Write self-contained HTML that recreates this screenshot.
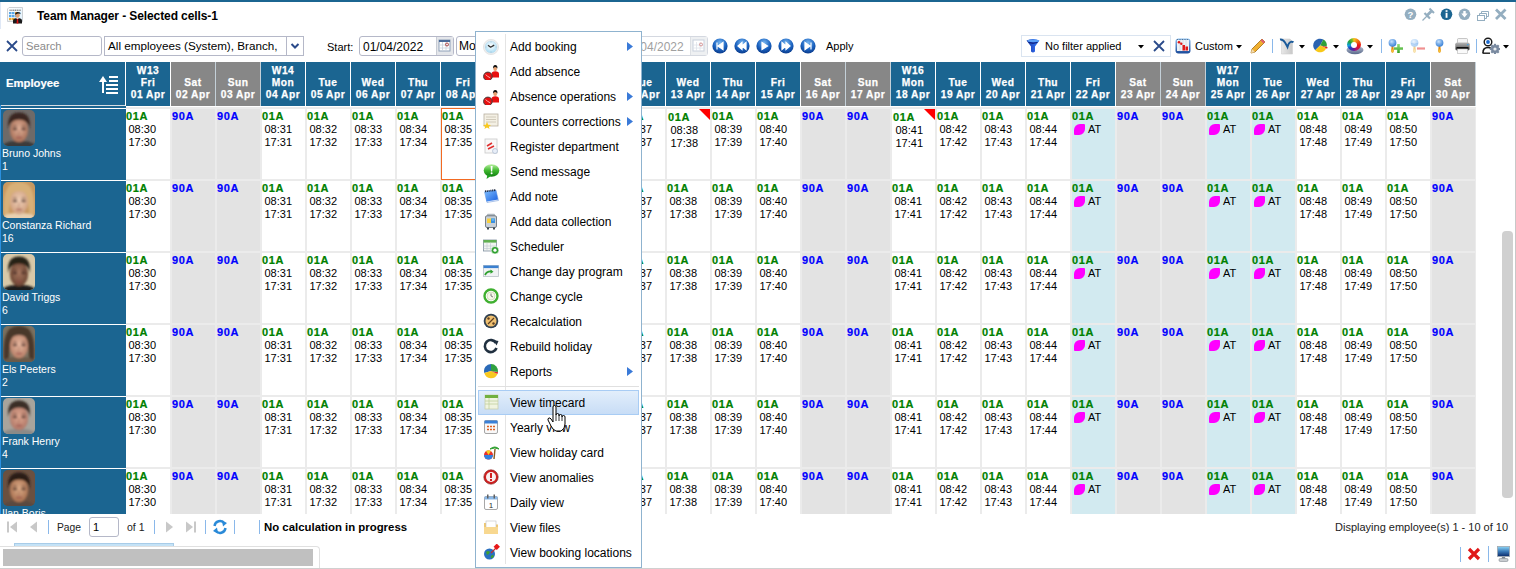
<!DOCTYPE html>
<html><head><meta charset="utf-8"><title>Team Manager</title>
<style>
*{box-sizing:border-box}
html,body{margin:0;padding:0}
body{width:1516px;height:569px;overflow:hidden;position:relative;background:#fff;font-family:"Liberation Sans",sans-serif;color:#000}
.ab{position:absolute}
.t{position:absolute;white-space:nowrap;line-height:1}
.hd{position:absolute;top:0;height:44px;width:44px;color:#fff;font-weight:bold;font-size:10.2px;letter-spacing:0.5px;text-align:center;-webkit-text-stroke:0.25px #fff}
.hd span{position:absolute;left:0;width:44px;line-height:12px}
.c{position:absolute;width:43px;height:70px;background:#fff;font-size:11px}
.c b{position:absolute;left:0;top:1px;font-size:11px;line-height:13px;letter-spacing:0.6px;-webkit-text-stroke:0.2px}
.g{color:#008000}
.bl{color:#0000ff}
.c i{position:absolute;font-style:normal;left:3px;line-height:13px}
.we{background:#e3e3e3}
.at{background:#d2eaf0}
.leaf{position:absolute;left:2px;top:15px;width:11px;height:11px;background:#ff00ff;border-radius:6px 1px 6px 1px}
.emp{position:absolute;left:0;width:126px;height:71px;background:#1b6591;color:#fff;font-size:10px}
.mi{position:absolute;left:510px;font-size:12px;line-height:14px;white-space:nowrap}
.ic{position:absolute;left:483px;width:16px;height:16px}
</style></head><body>

<div class="ab" style="left:0;top:0;width:1516px;height:2px;background:#1b6591"></div>
<div class="ab" style="left:1515px;top:2px;width:1px;height:567px;background:#c8c8c8"></div>
<div class="ab" style="left:0;top:2px;width:1px;height:27px;background:#dfe8f6"></div>
<svg class="ab" style="left:7px;top:7px" width="16" height="17" viewBox="0 0 16 17">
<defs><linearGradient id="tg" x1="0" y1="0" x2="1" y2="1"><stop offset="0" stop-color="#ffffff"/><stop offset="1" stop-color="#dff0fb"/></linearGradient></defs>
<path d="M2 0.5 H15.5 V14.5 H0.5 V2z" fill="url(#tg)" stroke="#c8ccd0" stroke-width="0.9"/>
<path d="M2.5 3.2 H14" stroke="#303030" stroke-width="0.8" stroke-dasharray="1.2 0.6"/>
<rect x="2" y="5" width="2.5" height="2.2" fill="#5aa8e8"/><rect x="5" y="5" width="2.5" height="2.2" fill="#5aa8e8"/><rect x="8" y="5" width="2.5" height="2.2" fill="#f0a830"/><rect x="11" y="5" width="2.5" height="2.2" fill="#8cc8f0"/>
<rect x="2" y="8" width="2.5" height="2.2" fill="#5aa8e8"/><rect x="5" y="8" width="2.5" height="2.2" fill="#5aa8e8"/><rect x="8" y="8" width="2.5" height="2.2" fill="#5aa8e8"/>
<rect x="2" y="11" width="2.5" height="2.2" fill="#f0a830"/><rect x="5" y="11" width="2.5" height="2.2" fill="#f0a830"/>
<path d="M6 16.5 V13.5 Q6 11.2 10.5 11 Q15 11.2 15 13.5 V16.5z" fill="#1a1a1a"/>
<path d="M9.3 11 L10.5 13 L11.7 11z" fill="#fff"/><path d="M10 11.8 H11 L11.5 16.5 H9.5z" fill="#e01010"/>
<ellipse cx="10.5" cy="8.3" rx="2.2" ry="2.5" fill="#e0a070"/>
<path d="M8 7.5 Q8 4.8 10.7 5 Q13.5 5 13.5 7.2 L12.5 6.6 Q10.5 6.2 8.6 7.8z" fill="#1a1a1a"/>
</svg>
<div class="t" style="left:37px;top:10px;font-size:12px;font-weight:bold;letter-spacing:-0.1px">Team Manager - Selected cells-1</div>
<svg class="ab" style="left:1404px;top:7px" width="104" height="15" viewBox="0 0 104 15">
<circle cx="6.5" cy="7.3" r="5.8" fill="#94aec0"/><text x="6.5" y="11" font-size="9.5" font-weight="bold" fill="#fff" text-anchor="middle" font-family="Liberation Sans">?</text>
<path d="M18.5 13.5 L23 9" stroke="#94aec0" stroke-width="1.2"/><path d="M20.5 6 L26 11.5" stroke="#94aec0" stroke-width="2.2"/><path d="M23 8.5 L27.5 4" stroke="#94aec0" stroke-width="2.8"/><path d="M25.5 1.5 L30 6" stroke="#94aec0" stroke-width="2"/>
<circle cx="42.5" cy="7.3" r="5.8" fill="#1b6591"/><rect x="41.6" y="5.8" width="1.9" height="5" fill="#fff"/><rect x="41.6" y="3.2" width="1.9" height="1.7" fill="#fff"/>
<circle cx="60.5" cy="7.3" r="5.8" fill="#94aec0"/><path d="M57.3 6.5 H59.3 V4 H61.7 V6.5 H63.7 L60.5 10.5z" fill="#fff"/>
<rect x="73.5" y="8.5" width="7" height="5" fill="#fff" stroke="#94aec0"/><path d="M75.5 8.5 V6.5 H82.5 V11.5 H80.5 M77.5 6.5 V4.5 H84.5 V9.5 H82.5" fill="none" stroke="#94aec0"/>
<path d="M92 2.5 L101.5 12 M101.5 2.5 L92 12" stroke="#94aec0" stroke-width="2.8"/>
</svg>
<svg class="ab" style="left:6px;top:40px" width="12" height="12" viewBox="0 0 12 12"><path d="M1 1 L11 11 M11 1 L1 11" stroke="#2a4a8a" stroke-width="1.8"/></svg>
<div class="ab" style="left:22px;top:36px;width:80px;height:20px;border:1px solid #b5b8c8;border-radius:3px;background:#fff"></div>
<div class="t" style="left:26px;top:41px;font-size:11.2px;color:#8a8a8a">Search</div>
<div class="ab" style="left:104px;top:36px;width:200px;height:20px;border:1px solid #b5b8c8;background:#fff"></div>
<div class="ab" style="left:286px;top:37px;width:1px;height:18px;background:#b5b8c8"></div>
<div class="t" style="left:108px;top:40px;font-size:11.7px;color:#000">All employees (System), Branch,</div>
<svg class="ab" style="left:290px;top:42px" width="10" height="8" viewBox="0 0 10 8"><path d="M1.5 2 L5 5.5 L8.5 2" stroke="#2a4a8a" stroke-width="2" fill="none"/></svg>
<div class="t" style="left:327px;top:42px;font-size:11px">Start:</div>
<div class="ab" style="left:359px;top:36px;width:95px;height:20px;border:1px solid #b5b8c8;border-radius:3px;background:#fff"></div>
<div class="t" style="left:363px;top:41px;font-size:12px">01/04/2022</div>
<div class="ab" style="left:436px;top:37px;width:17px;height:18px;background:#e4e6ea;border-left:1px solid #c8ccd4"></div>
<svg class="ab" style="left:438px;top:39px" width="13" height="13" viewBox="0 0 13 13"><rect x="1" y="1" width="11" height="11" fill="#fff" stroke="#8ea0b8"/><rect x="1" y="1" width="11" height="2" fill="#4a6a98"/><path d="M4.5 3 V12 M8 3 V12 M1 6 H12 M1 9 H12" stroke="#c8d0dc" stroke-width="0.8"/><circle cx="9" cy="5.5" r="1.5" fill="none" stroke="#a02020" stroke-width="0.8"/></svg>
<div class="ab" style="left:456px;top:36px;width:60px;height:20px;border:1px solid #b5b8c8;border-radius:3px;background:#fff"></div>
<div class="t" style="left:459px;top:40px;font-size:12px">Mo</div>
<div class="ab" style="left:600px;top:36px;width:108px;height:20px;border:1px solid #d4d8e0;border-radius:3px;background:#fff"></div>
<div class="t" style="left:637px;top:41px;font-size:12px;color:#a0a0a0">/04/2022</div>
<div class="ab" style="left:690px;top:37px;width:17px;height:18px;background:#eef0f2;border-left:1px solid #dde0e4"></div>
<svg class="ab" style="left:692px;top:39px" width="13" height="13" viewBox="0 0 13 13"><rect x="1" y="1" width="11" height="11" fill="#fff" stroke="#c8d0dc"/><path d="M4.5 3 V12 M8 3 V12 M1 6 H12 M1 9 H12" stroke="#dde2ea" stroke-width="0.8"/><circle cx="9" cy="5.5" r="1.5" fill="none" stroke="#d08080" stroke-width="0.8"/></svg>
<svg class="ab" style="left:712px;top:38px" width="16" height="16" viewBox="0 0 16 16"><defs><radialGradient id="ng0" cx="50%" cy="30%" r="70%"><stop offset="0" stop-color="#7ab8f0"/><stop offset="0.6" stop-color="#1a62c0"/><stop offset="1" stop-color="#0a3a8a"/></radialGradient></defs><circle cx="8" cy="8" r="7.6" fill="url(#ng0)"/><path d="M5 4.5 V11.5 M11 4.5 L6 8 L11 11.5z" fill="#fff" stroke="#fff" stroke-width="1.2"/></svg>
<svg class="ab" style="left:734px;top:38px" width="16" height="16" viewBox="0 0 16 16"><defs><radialGradient id="ng1" cx="50%" cy="30%" r="70%"><stop offset="0" stop-color="#7ab8f0"/><stop offset="0.6" stop-color="#1a62c0"/><stop offset="1" stop-color="#0a3a8a"/></radialGradient></defs><circle cx="8" cy="8" r="7.6" fill="url(#ng1)"/><path d="M8 4.5 L4 8 L8 11.5z M12 4.5 L8 8 L12 11.5z" fill="#fff" stroke="#fff" stroke-width="1.2"/></svg>
<svg class="ab" style="left:756px;top:38px" width="16" height="16" viewBox="0 0 16 16"><defs><radialGradient id="ng2" cx="50%" cy="30%" r="70%"><stop offset="0" stop-color="#7ab8f0"/><stop offset="0.6" stop-color="#1a62c0"/><stop offset="1" stop-color="#0a3a8a"/></radialGradient></defs><circle cx="8" cy="8" r="7.6" fill="url(#ng2)"/><path d="M6 4.5 L11.5 8 L6 11.5z" fill="#fff" stroke="#fff" stroke-width="1.2"/></svg>
<svg class="ab" style="left:778px;top:38px" width="16" height="16" viewBox="0 0 16 16"><defs><radialGradient id="ng3" cx="50%" cy="30%" r="70%"><stop offset="0" stop-color="#7ab8f0"/><stop offset="0.6" stop-color="#1a62c0"/><stop offset="1" stop-color="#0a3a8a"/></radialGradient></defs><circle cx="8" cy="8" r="7.6" fill="url(#ng3)"/><path d="M4 4.5 L8 8 L4 11.5z M8 4.5 L12 8 L8 11.5z" fill="#fff" stroke="#fff" stroke-width="1.2"/></svg>
<svg class="ab" style="left:800px;top:38px" width="16" height="16" viewBox="0 0 16 16"><defs><radialGradient id="ng4" cx="50%" cy="30%" r="70%"><stop offset="0" stop-color="#7ab8f0"/><stop offset="0.6" stop-color="#1a62c0"/><stop offset="1" stop-color="#0a3a8a"/></radialGradient></defs><circle cx="8" cy="8" r="7.6" fill="url(#ng4)"/><path d="M5 4.5 L10 8 L5 11.5z M11 4.5 V11.5" fill="#fff" stroke="#fff" stroke-width="1.2"/></svg>
<div class="t" style="left:826px;top:41px;font-size:11px">Apply</div>
<div class="ab" style="left:1021px;top:35px;width:150px;height:22px;border:1px solid #dae4f0;background:#fff"></div>
<svg class="ab" style="left:1026px;top:38px" width="14" height="15" viewBox="0 0 14 15"><defs><linearGradient id="fg" x1="0" x2="1"><stop offset="0" stop-color="#1a3aa8"/><stop offset="0.6" stop-color="#2a60e0"/><stop offset="1" stop-color="#3a88f0"/></linearGradient></defs><path d="M0.5 2.5 Q7 -0.5 13.5 2.5 L9 8.5 V13.5 Q7 15.5 5 13.5 V8.5z" fill="url(#fg)"/><ellipse cx="7" cy="2.8" rx="5.5" ry="1.3" fill="#5aa0f8"/><path d="M2.5 4.5 Q7 6 11.5 4.5" stroke="#0a1a70" stroke-width="1" fill="none"/></svg>
<div class="t" style="left:1045px;top:41px;font-size:11px;color:#000">No filter applied</div>
<svg class="ab" style="left:1138px;top:45px" width="6" height="4"><path d="M0 0 H6 L3 3.5z" fill="#000"/></svg>
<svg class="ab" style="left:1153px;top:40px" width="12" height="12" viewBox="0 0 12 12"><path d="M1 1 L11 11 M11 1 L1 11" stroke="#2a4a8a" stroke-width="1.8"/></svg>
<svg class="ab" style="left:1175px;top:38px" width="16" height="16" viewBox="0 0 16 16"><defs><linearGradient id="cg" x1="0" y1="0" x2="0" y2="1"><stop offset="0" stop-color="#8ec0f0"/><stop offset="1" stop-color="#1a4a9a"/></linearGradient></defs><rect x="0.5" y="0.5" width="15" height="15" rx="3" fill="url(#cg)"/><rect x="2" y="2" width="12" height="11" fill="#eef2f6"/><path d="M5 2 V13 M8 2 V13 M11 2 V13" stroke="#c8d4e0" stroke-width="0.7"/><path d="M2 1.5 H14" stroke="#506070" stroke-width="0.8" stroke-dasharray="1 1.5"/><circle cx="4" cy="4.2" r="1.3" fill="#e01818"/><circle cx="6.3" cy="5.8" r="1.2" fill="#e01818"/><rect x="7.5" y="7" width="2.5" height="5.5" fill="#e01818"/><rect x="10.5" y="8.5" width="2.5" height="4" fill="#e01818"/></svg>
<div class="t" style="left:1195px;top:41px;font-size:11px">Custom</div>
<svg class="ab" style="left:1236px;top:45px" width="6" height="4"><path d="M0 0 H6 L3 3.5z" fill="#000"/></svg>
<svg class="ab" style="left:1249px;top:38px" width="17" height="17" viewBox="0 0 17 17"><path d="M2 15 L3 11 L13 1 L16 4 L6 14z" fill="#f0b030" stroke="#a06a10" stroke-width="0.8"/><path d="M2 15 L3 11 L6 14z" fill="#f4dcb0"/><path d="M13 1 L16 4 L14.5 5.5 L11.5 2.5z" fill="#e06070"/></svg>
<div class="ab" style="left:1272px;top:39px;width:1px;height:14px;background:#8ab8ea"></div>
<svg class="ab" style="left:1279px;top:38px" width="16" height="17" viewBox="0 0 16 17"><defs><linearGradient id="yg" x1="0" x2="1"><stop offset="0" stop-color="#e8e8e8"/><stop offset="1" stop-color="#c8c8c8"/></linearGradient></defs><path d="M2.5 1 H11 L13.5 3.5 V16 H2.5z" fill="url(#yg)" stroke="#d0d0d0" stroke-width="0.6"/><path d="M1 1.5 Q4 1 6 4.5 Q7.5 7 8.5 9 Q9.5 5 11.5 4 Q13 3.3 14.5 4.3" fill="none" stroke="#1a5a9a" stroke-width="1.9"/></svg>
<svg class="ab" style="left:1299px;top:45px" width="6" height="4"><path d="M0 0 H6 L3 3.5z" fill="#000"/></svg>
<svg class="ab" style="left:1313px;top:38px" width="16" height="16" viewBox="0 0 16 16"><path d="M7 7.5 L2.19 12.31 A6.8 6.8 0 0 1 10.40 1.61z" fill="#2a62b0"/><path d="M7 7.5 L10.40 1.61 A6.8 6.8 0 0 1 13.70 8.68z" fill="#30a038"/><path d="M7.9 7.8 L14.60 8.98 A6.8 6.8 0 0 1 14.06 10.67z" fill="#e82020"/><path d="M7 7.5 L13.16 10.37 A6.8 6.8 0 0 1 2.19 12.31z" fill="#f8c818"/></svg>
<svg class="ab" style="left:1333px;top:45px" width="6" height="4"><path d="M0 0 H6 L3 3.5z" fill="#000"/></svg>
<svg class="ab" style="left:1346px;top:45px" width="18" height="10" viewBox="0 0 18 10"><defs><linearGradient id="bg2" x1="0" y1="0" x2="0" y2="1"><stop offset="0" stop-color="#c0c8d8"/><stop offset="1" stop-color="#58688a"/></linearGradient></defs><ellipse cx="9" cy="5" rx="8.5" ry="4.2" fill="url(#bg2)"/><ellipse cx="9" cy="3.8" rx="6" ry="2.2" fill="#8a98b8"/></svg>
<div class="ab" style="left:1347px;top:38px;width:14px;height:13px;border-radius:50%;background:conic-gradient(#f8c020 0deg,#f07010 50deg,#e81818 100deg,#c01060 150deg,#5020a0 190deg,#2040c0 230deg,#10a0e0 260deg,#20a040 300deg,#80c020 340deg,#f8c020 360deg)"></div>
<div class="ab" style="left:1351px;top:41.5px;width:6px;height:6px;border-radius:50%;background:#fff"></div>
<svg class="ab" style="left:1367px;top:45px" width="6" height="4"><path d="M0 0 H6 L3 3.5z" fill="#000"/></svg>
<div class="ab" style="left:1381px;top:39px;width:1px;height:14px;background:#8ab8ea"></div>
<svg class="ab" style="left:1388px;top:38px" width="16" height="16" viewBox="0 0 16 16"><defs><radialGradient id="p1" cx="40%" cy="35%" r="65%"><stop offset="0" stop-color="#c8e2fc"/><stop offset="1" stop-color="#3a82d8"/></radialGradient></defs><path d="M3.6 8 H5.4 L5.8 12.5 Q5.8 14.8 4.5 14.8 Q3.2 14.8 3.2 12.5z" fill="#e08a10"/><ellipse cx="4.5" cy="12.8" rx="1.1" ry="1.6" fill="#f8c030"/><circle cx="4.5" cy="4.8" r="3.9" fill="url(#p1)"/><path d="M1.2 5.5 Q4.5 7 7.8 5.5" stroke="#5a9ae0" stroke-width="0.5" fill="none" opacity="0.6"/><defs><linearGradient id="pg" x1="0" y1="0" x2="0" y2="1"><stop offset="0" stop-color="#9ae080"/><stop offset="1" stop-color="#30a020"/></linearGradient></defs><path d="M6 10.5 H15 M10.5 6 V15" stroke="url(#pg)" stroke-width="2.6"/></svg>
<svg class="ab" style="left:1410px;top:38px" width="16" height="16" viewBox="0 0 16 16"><defs><radialGradient id="p2" cx="40%" cy="35%" r="65%"><stop offset="0" stop-color="#eaf4fe"/><stop offset="1" stop-color="#a8cdf4"/></radialGradient></defs><path d="M3.6 8 H5.4 L5.8 12.5 Q5.8 14.8 4.5 14.8 Q3.2 14.8 3.2 12.5z" fill="#f0d090"/><ellipse cx="4.5" cy="12.8" rx="1.1" ry="1.6" fill="#fbe6b0"/><circle cx="4.5" cy="4.8" r="3.9" fill="url(#p2)"/><path d="M1.2 5.5 Q4.5 7 7.8 5.5" stroke="#5a9ae0" stroke-width="0.5" fill="none" opacity="0.6"/><path d="M7 10.5 H15" stroke="#f09090" stroke-width="2.2"/></svg>
<svg class="ab" style="left:1435px;top:38px" width="16" height="16" viewBox="0 0 16 16"><defs><radialGradient id="p3" cx="40%" cy="35%" r="65%"><stop offset="0" stop-color="#c8e2fc"/><stop offset="1" stop-color="#3a82d8"/></radialGradient></defs><path d="M3.6 8 H5.4 L5.8 12.5 Q5.8 14.8 4.5 14.8 Q3.2 14.8 3.2 12.5z" fill="#e08a10"/><ellipse cx="4.5" cy="12.8" rx="1.1" ry="1.6" fill="#f8c030"/><circle cx="4.5" cy="4.8" r="3.9" fill="url(#p3)"/><path d="M1.2 5.5 Q4.5 7 7.8 5.5" stroke="#5a9ae0" stroke-width="0.5" fill="none" opacity="0.6"/></svg>
<svg class="ab" style="left:1455px;top:38px" width="15" height="16" viewBox="0 0 15 16"><defs><linearGradient id="prg" x1="0" y1="0" x2="0" y2="1"><stop offset="0" stop-color="#b8b8b8"/><stop offset="1" stop-color="#4a4a4a"/></linearGradient></defs><rect x="2.5" y="0.5" width="10" height="5" rx="1" fill="#f4f4f4" stroke="#b0b0b0" stroke-width="0.7"/><rect x="0.3" y="4.5" width="14.4" height="8" rx="1.8" fill="url(#prg)"/><rect x="1.5" y="9" width="12" height="2" fill="#101010"/><rect x="2.5" y="11" width="10" height="4.5" fill="#fafafa" stroke="#b8b8b8" stroke-width="0.6"/><rect x="12" y="6" width="1.5" height="1.2" fill="#40a0e0"/></svg>
<div class="ab" style="left:1476px;top:39px;width:1px;height:14px;background:#8ab8ea"></div>
<svg class="ab" style="left:1482px;top:37px" width="18" height="17" viewBox="0 0 18 17"><circle cx="6" cy="5" r="3.8" fill="#fff" stroke="#1a1a1a" stroke-width="1.4"/><circle cx="6" cy="5" r="1.9" fill="#1a6ad0"/><path d="M1 16 Q0.8 10.5 6 10.5 Q8 10.5 9 11.5" fill="none" stroke="#1a1a1a" stroke-width="1.6"/><path d="M0.5 16.2 H8" stroke="#1a1a1a" stroke-width="1.4"/><g transform="translate(13 12)"><circle r="4" fill="#7a8aa0"/><rect x="-1.1" y="-5.2" width="2.2" height="2.4" fill="#7a8aa0" transform="rotate(0)"/><rect x="-1.1" y="-5.2" width="2.2" height="2.4" fill="#7a8aa0" transform="rotate(45)"/><rect x="-1.1" y="-5.2" width="2.2" height="2.4" fill="#7a8aa0" transform="rotate(90)"/><rect x="-1.1" y="-5.2" width="2.2" height="2.4" fill="#7a8aa0" transform="rotate(135)"/><rect x="-1.1" y="-5.2" width="2.2" height="2.4" fill="#7a8aa0" transform="rotate(180)"/><rect x="-1.1" y="-5.2" width="2.2" height="2.4" fill="#7a8aa0" transform="rotate(225)"/><rect x="-1.1" y="-5.2" width="2.2" height="2.4" fill="#7a8aa0" transform="rotate(270)"/><rect x="-1.1" y="-5.2" width="2.2" height="2.4" fill="#7a8aa0" transform="rotate(315)"/><circle r="1.6" fill="#e8ecf0"/></g></svg>
<svg class="ab" style="left:1503px;top:45px" width="6" height="4"><path d="M0 0 H6 L3 3.5z" fill="#000"/></svg>
<div class="ab" style="left:0;top:62px;width:1476px;height:452px;overflow:hidden">
<div class="ab" style="left:0;top:0;width:125px;height:43px;background:#1b6591"></div>
<div class="ab" style="left:0;top:43px;width:125px;height:1px;background:#d8dde2"></div>
<div class="ab" style="left:0;top:44px;width:126px;height:2px;background:#1b6591"></div>
<div class="t" style="left:6px;top:16px;font-size:11.3px;font-weight:bold;color:#fff;-webkit-text-stroke:0.2px #fff">Employee</div>
<svg class="ab" style="left:98px;top:13px" width="21" height="19" viewBox="0 0 21 19"><path d="M1 7 L5 1 L9 7z" fill="#fff"/><rect x="4" y="5" width="2" height="13" fill="#fff"/><rect x="11" y="1" width="9" height="2" fill="#fff"/><rect x="11" y="5" width="9" height="2" fill="#fff"/><rect x="8" y="9" width="12" height="2" fill="#fff"/><rect x="8" y="13" width="12" height="2" fill="#fff"/><rect x="8" y="17" width="12" height="2" fill="#fff"/></svg>
<div class="ab" style="left:126px;top:45px;width:1350px;height:420px;background:#ebebeb"></div>
<div class="hd" style="left:126px;background:#1b6591">
<span style="top:3px">W13</span>
<span style="top:15px">Fri</span><span style="top:27px">01 Apr</span></div>
<div class="hd" style="left:171px;background:#878787">
<span style="top:15px">Sat</span><span style="top:27px">02 Apr</span></div>
<div class="ab" style="left:215px;top:0;width:1px;height:44px;background:#c4d0d8"></div>
<div class="hd" style="left:216px;background:#878787">
<span style="top:15px">Sun</span><span style="top:27px">03 Apr</span></div>
<div class="ab" style="left:260px;top:0;width:1px;height:44px;background:#c4d0d8"></div>
<div class="hd" style="left:261px;background:#1b6591">
<span style="top:3px">W14</span>
<span style="top:15px">Mon</span><span style="top:27px">04 Apr</span></div>
<div class="hd" style="left:306px;background:#1b6591">
<span style="top:15px">Tue</span><span style="top:27px">05 Apr</span></div>
<div class="hd" style="left:351px;background:#1b6591">
<span style="top:15px">Wed</span><span style="top:27px">06 Apr</span></div>
<div class="hd" style="left:396px;background:#1b6591">
<span style="top:15px">Thu</span><span style="top:27px">07 Apr</span></div>
<div class="hd" style="left:441px;background:#1b6591">
<span style="top:15px">Fri</span><span style="top:27px">08 Apr</span></div>
<div class="hd" style="left:486px;background:#878787">
<span style="top:15px">Sat</span><span style="top:27px">09 Apr</span></div>
<div class="ab" style="left:530px;top:0;width:1px;height:44px;background:#c4d0d8"></div>
<div class="hd" style="left:531px;background:#878787">
<span style="top:15px">Sun</span><span style="top:27px">10 Apr</span></div>
<div class="ab" style="left:575px;top:0;width:1px;height:44px;background:#c4d0d8"></div>
<div class="hd" style="left:576px;background:#1b6591">
<span style="top:3px">W15</span>
<span style="top:15px">Mon</span><span style="top:27px">11 Apr</span></div>
<div class="hd" style="left:621px;background:#1b6591">
<span style="top:15px">Tue</span><span style="top:27px">12 Apr</span></div>
<div class="hd" style="left:666px;background:#1b6591">
<span style="top:15px">Wed</span><span style="top:27px">13 Apr</span></div>
<div class="hd" style="left:711px;background:#1b6591">
<span style="top:15px">Thu</span><span style="top:27px">14 Apr</span></div>
<div class="hd" style="left:756px;background:#1b6591">
<span style="top:15px">Fri</span><span style="top:27px">15 Apr</span></div>
<div class="hd" style="left:801px;background:#878787">
<span style="top:15px">Sat</span><span style="top:27px">16 Apr</span></div>
<div class="ab" style="left:845px;top:0;width:1px;height:44px;background:#c4d0d8"></div>
<div class="hd" style="left:846px;background:#878787">
<span style="top:15px">Sun</span><span style="top:27px">17 Apr</span></div>
<div class="ab" style="left:890px;top:0;width:1px;height:44px;background:#c4d0d8"></div>
<div class="hd" style="left:891px;background:#1b6591">
<span style="top:3px">W16</span>
<span style="top:15px">Mon</span><span style="top:27px">18 Apr</span></div>
<div class="hd" style="left:936px;background:#1b6591">
<span style="top:15px">Tue</span><span style="top:27px">19 Apr</span></div>
<div class="hd" style="left:981px;background:#1b6591">
<span style="top:15px">Wed</span><span style="top:27px">20 Apr</span></div>
<div class="hd" style="left:1026px;background:#1b6591">
<span style="top:15px">Thu</span><span style="top:27px">21 Apr</span></div>
<div class="hd" style="left:1071px;background:#1b6591">
<span style="top:15px">Fri</span><span style="top:27px">22 Apr</span></div>
<div class="hd" style="left:1116px;background:#878787">
<span style="top:15px">Sat</span><span style="top:27px">23 Apr</span></div>
<div class="ab" style="left:1160px;top:0;width:1px;height:44px;background:#c4d0d8"></div>
<div class="hd" style="left:1161px;background:#878787">
<span style="top:15px">Sun</span><span style="top:27px">24 Apr</span></div>
<div class="ab" style="left:1205px;top:0;width:1px;height:44px;background:#c4d0d8"></div>
<div class="hd" style="left:1206px;background:#1b6591">
<span style="top:3px">W17</span>
<span style="top:15px">Mon</span><span style="top:27px">25 Apr</span></div>
<div class="hd" style="left:1251px;background:#1b6591">
<span style="top:15px">Tue</span><span style="top:27px">26 Apr</span></div>
<div class="hd" style="left:1296px;background:#1b6591">
<span style="top:15px">Wed</span><span style="top:27px">27 Apr</span></div>
<div class="hd" style="left:1341px;background:#1b6591">
<span style="top:15px">Thu</span><span style="top:27px">28 Apr</span></div>
<div class="hd" style="left:1386px;background:#1b6591">
<span style="top:15px">Fri</span><span style="top:27px">29 Apr</span></div>
<div class="hd" style="left:1431px;background:#878787">
<span style="top:15px">Sat</span><span style="top:27px">30 Apr</span></div>
<div class="ab" style="left:1475px;top:0;width:1px;height:44px;background:#c4d0d8"></div>
<div class="emp" style="top:47px">
<svg class="ab" style="left:3px;top:1px" width="32" height="36" viewBox="0 0 32 36"><defs><clipPath id="cp0"><rect width="32" height="36" rx="5"/></clipPath><filter id="bl0" x="-10%" y="-10%" width="120%" height="120%"><feGaussianBlur stdDeviation="0.8"/></filter><radialGradient id="sk0" cx="50%" cy="45%" r="55%"><stop offset="0" stop-color="#e0b098"/><stop offset="1" stop-color="#a87058"/></radialGradient></defs><g clip-path="url(#cp0)"><rect width="32" height="36" fill="#6e6a68"/><g filter="url(#bl0)"><path d="M-2 38 Q1 30 16 31 Q31 30 34 38z" fill="#3a3a3a"/><ellipse cx="16" cy="20" rx="9.2" ry="12.2" fill="url(#sk0)"/><path d="M5.5 19 Q3 3 16 2.5 Q29 3 26.5 19 Q26 10 16 9.5 Q6 10 5.5 19z" fill="#3a2820"/><ellipse cx="12" cy="19" rx="2.4" ry="1.2" fill="#3a2420" opacity="0.7"/><ellipse cx="20.5" cy="19" rx="2.4" ry="1.2" fill="#3a2420" opacity="0.7"/><path d="M10 16.3 Q12 15.6 14 16.3 M18.5 16.3 Q20.5 15.6 22.5 16.3" stroke="#3a2420" stroke-width="0.9" fill="none" opacity="0.6"/><path d="M16 20 V24.5 Q15 25 14.5 24.5" stroke="#8a5040" stroke-width="0.8" fill="none" opacity="0.5"/><ellipse cx="16.2" cy="27.5" rx="3.2" ry="1.1" fill="#904040" opacity="0.6"/></g></g></svg>
<div class="t" style="left:2px;top:38px;font-size:10.5px;line-height:13px">Bruno Johns<br>1</div>
</div>
<div class="ab" style="left:0;top:118px;width:126px;height:1px;background:#fff"></div>
<div class="c" style="left:126px;top:47px;width:44px"><b class="g" style="left:0px;top:1px">01A</b><i style="left:2.5px;top:14px">08:30</i><i style="left:2.5px;top:27px">17:30</i></div>
<div class="c we" style="left:172px;top:47px;width:43px"><b class="bl">90A</b></div>
<div class="c we" style="left:217px;top:47px;width:43px"><b class="bl">90A</b></div>
<div class="c" style="left:262px;top:47px;width:43px"><b class="g" style="left:0px;top:1px">01A</b><i style="left:2.5px;top:14px">08:31</i><i style="left:2.5px;top:27px">17:31</i></div>
<div class="c" style="left:307px;top:47px;width:43px"><b class="g" style="left:0px;top:1px">01A</b><i style="left:2.5px;top:14px">08:32</i><i style="left:2.5px;top:27px">17:32</i></div>
<div class="c" style="left:352px;top:47px;width:43px"><b class="g" style="left:0px;top:1px">01A</b><i style="left:2.5px;top:14px">08:33</i><i style="left:2.5px;top:27px">17:33</i></div>
<div class="c" style="left:397px;top:47px;width:43px"><b class="g" style="left:0px;top:1px">01A</b><i style="left:2.5px;top:14px">08:34</i><i style="left:2.5px;top:27px">17:34</i></div>
<div class="c" style="left:442px;top:47px;width:43px"><b class="g" style="left:0px;top:1px">01A</b><i style="left:2.5px;top:14px">08:35</i><i style="left:2.5px;top:27px">17:35</i></div>
<div class="c we" style="left:487px;top:47px;width:43px"><b class="bl">90A</b></div>
<div class="c we" style="left:532px;top:47px;width:43px"><b class="bl">90A</b></div>
<div class="c" style="left:577px;top:47px;width:43px"><b class="g" style="left:0px;top:1px">01A</b><i style="left:2.5px;top:14px">08:36</i><i style="left:2.5px;top:27px">17:36</i></div>
<div class="c" style="left:622px;top:47px;width:43px"><b class="g" style="left:0px;top:1px">01A</b><i style="left:2.5px;top:14px">08:37</i><i style="left:2.5px;top:27px">17:37</i></div>
<div class="c" style="left:667px;top:47px;width:43px"><svg class="ab" style="right:0;top:0" width="11" height="11"><defs><linearGradient id="rg" x1="1" y1="0" x2="0" y2="1"><stop offset="0.5" stop-color="#ff0000"/><stop offset="1" stop-color="#ff9090"/></linearGradient></defs><path d="M0 0 H11 V11z" fill="url(#rg)"/></svg><b class="g" style="left:1px;top:2px">01A</b><i style="left:3.5px;top:15px">08:38</i><i style="left:3.5px;top:28px">17:38</i></div>
<div class="c" style="left:712px;top:47px;width:43px"><b class="g" style="left:0px;top:1px">01A</b><i style="left:2.5px;top:14px">08:39</i><i style="left:2.5px;top:27px">17:39</i></div>
<div class="c" style="left:757px;top:47px;width:43px"><b class="g" style="left:0px;top:1px">01A</b><i style="left:2.5px;top:14px">08:40</i><i style="left:2.5px;top:27px">17:40</i></div>
<div class="c we" style="left:802px;top:47px;width:43px"><b class="bl">90A</b></div>
<div class="c we" style="left:847px;top:47px;width:43px"><b class="bl">90A</b></div>
<div class="c" style="left:892px;top:47px;width:43px"><svg class="ab" style="right:0;top:0" width="11" height="11"><defs><linearGradient id="rg" x1="1" y1="0" x2="0" y2="1"><stop offset="0.5" stop-color="#ff0000"/><stop offset="1" stop-color="#ff9090"/></linearGradient></defs><path d="M0 0 H11 V11z" fill="url(#rg)"/></svg><b class="g" style="left:1px;top:2px">01A</b><i style="left:3.5px;top:15px">08:41</i><i style="left:3.5px;top:28px">17:41</i></div>
<div class="c" style="left:937px;top:47px;width:43px"><b class="g" style="left:0px;top:1px">01A</b><i style="left:2.5px;top:14px">08:42</i><i style="left:2.5px;top:27px">17:42</i></div>
<div class="c" style="left:982px;top:47px;width:43px"><b class="g" style="left:0px;top:1px">01A</b><i style="left:2.5px;top:14px">08:43</i><i style="left:2.5px;top:27px">17:43</i></div>
<div class="c" style="left:1027px;top:47px;width:43px"><b class="g" style="left:0px;top:1px">01A</b><i style="left:2.5px;top:14px">08:44</i><i style="left:2.5px;top:27px">17:44</i></div>
<div class="c at" style="left:1072px;top:47px;width:43px"><b class="g">01A</b><div class="leaf"></div><i style="left:16px;top:14px">AT</i></div>
<div class="c we" style="left:1117px;top:47px;width:43px"><b class="bl">90A</b></div>
<div class="c we" style="left:1162px;top:47px;width:43px"><b class="bl">90A</b></div>
<div class="c at" style="left:1207px;top:47px;width:43px"><b class="g">01A</b><div class="leaf"></div><i style="left:16px;top:14px">AT</i></div>
<div class="c at" style="left:1252px;top:47px;width:43px"><b class="g">01A</b><div class="leaf"></div><i style="left:16px;top:14px">AT</i></div>
<div class="c" style="left:1297px;top:47px;width:43px"><b class="g" style="left:0px;top:1px">01A</b><i style="left:2.5px;top:14px">08:48</i><i style="left:2.5px;top:27px">17:48</i></div>
<div class="c" style="left:1342px;top:47px;width:43px"><b class="g" style="left:0px;top:1px">01A</b><i style="left:2.5px;top:14px">08:49</i><i style="left:2.5px;top:27px">17:49</i></div>
<div class="c" style="left:1387px;top:47px;width:43px"><b class="g" style="left:0px;top:1px">01A</b><i style="left:2.5px;top:14px">08:50</i><i style="left:2.5px;top:27px">17:50</i></div>
<div class="c we" style="left:1432px;top:47px;width:43px"><b class="bl">90A</b></div>
<div class="emp" style="top:119px">
<svg class="ab" style="left:3px;top:1px" width="32" height="36" viewBox="0 0 32 36"><defs><clipPath id="cp1"><rect width="32" height="36" rx="5"/></clipPath><filter id="bl1" x="-10%" y="-10%" width="120%" height="120%"><feGaussianBlur stdDeviation="0.8"/></filter><radialGradient id="sk1" cx="50%" cy="45%" r="55%"><stop offset="0" stop-color="#f0d0b8"/><stop offset="1" stop-color="#d0a080"/></radialGradient></defs><g clip-path="url(#cp1)"><rect width="32" height="36" fill="#c89860"/><g filter="url(#bl1)"><path d="M1 36 Q-1 8 8 2 Q16 -2 24 2 Q33 8 31 36 H26 Q27 14 16 11 Q5 14 6 36z" fill="#d8b078"/><path d="M-2 38 Q1 30 16 31 Q31 30 34 38z" fill="#e8d0b0"/><ellipse cx="16" cy="20" rx="9.2" ry="12.2" fill="url(#sk1)"/><path d="M6 16 Q7 5 16 5 Q25 5 26 16 Q24 9 16 9 Q8 9 6 16z" fill="#d8b078"/><ellipse cx="12" cy="19" rx="2.4" ry="1.2" fill="#3a2420" opacity="0.7"/><ellipse cx="20.5" cy="19" rx="2.4" ry="1.2" fill="#3a2420" opacity="0.7"/><path d="M10 16.3 Q12 15.6 14 16.3 M18.5 16.3 Q20.5 15.6 22.5 16.3" stroke="#3a2420" stroke-width="0.9" fill="none" opacity="0.6"/><path d="M16 20 V24.5 Q15 25 14.5 24.5" stroke="#8a5040" stroke-width="0.8" fill="none" opacity="0.5"/><ellipse cx="16.2" cy="27.5" rx="3.2" ry="1.1" fill="#904040" opacity="0.6"/></g></g></svg>
<div class="t" style="left:2px;top:38px;font-size:10.5px;line-height:13px">Constanza Richard<br>16</div>
</div>
<div class="ab" style="left:0;top:190px;width:126px;height:1px;background:#fff"></div>
<div class="c" style="left:126px;top:119px;width:44px"><b class="g" style="left:0px;top:1px">01A</b><i style="left:2.5px;top:14px">08:30</i><i style="left:2.5px;top:27px">17:30</i></div>
<div class="c we" style="left:172px;top:119px;width:43px"><b class="bl">90A</b></div>
<div class="c we" style="left:217px;top:119px;width:43px"><b class="bl">90A</b></div>
<div class="c" style="left:262px;top:119px;width:43px"><b class="g" style="left:0px;top:1px">01A</b><i style="left:2.5px;top:14px">08:31</i><i style="left:2.5px;top:27px">17:31</i></div>
<div class="c" style="left:307px;top:119px;width:43px"><b class="g" style="left:0px;top:1px">01A</b><i style="left:2.5px;top:14px">08:32</i><i style="left:2.5px;top:27px">17:32</i></div>
<div class="c" style="left:352px;top:119px;width:43px"><b class="g" style="left:0px;top:1px">01A</b><i style="left:2.5px;top:14px">08:33</i><i style="left:2.5px;top:27px">17:33</i></div>
<div class="c" style="left:397px;top:119px;width:43px"><b class="g" style="left:0px;top:1px">01A</b><i style="left:2.5px;top:14px">08:34</i><i style="left:2.5px;top:27px">17:34</i></div>
<div class="c" style="left:442px;top:119px;width:43px"><b class="g" style="left:0px;top:1px">01A</b><i style="left:2.5px;top:14px">08:35</i><i style="left:2.5px;top:27px">17:35</i></div>
<div class="c we" style="left:487px;top:119px;width:43px"><b class="bl">90A</b></div>
<div class="c we" style="left:532px;top:119px;width:43px"><b class="bl">90A</b></div>
<div class="c" style="left:577px;top:119px;width:43px"><b class="g" style="left:0px;top:1px">01A</b><i style="left:2.5px;top:14px">08:36</i><i style="left:2.5px;top:27px">17:36</i></div>
<div class="c" style="left:622px;top:119px;width:43px"><b class="g" style="left:0px;top:1px">01A</b><i style="left:2.5px;top:14px">08:37</i><i style="left:2.5px;top:27px">17:37</i></div>
<div class="c" style="left:667px;top:119px;width:43px"><b class="g" style="left:0px;top:1px">01A</b><i style="left:2.5px;top:14px">08:38</i><i style="left:2.5px;top:27px">17:38</i></div>
<div class="c" style="left:712px;top:119px;width:43px"><b class="g" style="left:0px;top:1px">01A</b><i style="left:2.5px;top:14px">08:39</i><i style="left:2.5px;top:27px">17:39</i></div>
<div class="c" style="left:757px;top:119px;width:43px"><b class="g" style="left:0px;top:1px">01A</b><i style="left:2.5px;top:14px">08:40</i><i style="left:2.5px;top:27px">17:40</i></div>
<div class="c we" style="left:802px;top:119px;width:43px"><b class="bl">90A</b></div>
<div class="c we" style="left:847px;top:119px;width:43px"><b class="bl">90A</b></div>
<div class="c" style="left:892px;top:119px;width:43px"><b class="g" style="left:0px;top:1px">01A</b><i style="left:2.5px;top:14px">08:41</i><i style="left:2.5px;top:27px">17:41</i></div>
<div class="c" style="left:937px;top:119px;width:43px"><b class="g" style="left:0px;top:1px">01A</b><i style="left:2.5px;top:14px">08:42</i><i style="left:2.5px;top:27px">17:42</i></div>
<div class="c" style="left:982px;top:119px;width:43px"><b class="g" style="left:0px;top:1px">01A</b><i style="left:2.5px;top:14px">08:43</i><i style="left:2.5px;top:27px">17:43</i></div>
<div class="c" style="left:1027px;top:119px;width:43px"><b class="g" style="left:0px;top:1px">01A</b><i style="left:2.5px;top:14px">08:44</i><i style="left:2.5px;top:27px">17:44</i></div>
<div class="c at" style="left:1072px;top:119px;width:43px"><b class="g">01A</b><div class="leaf"></div><i style="left:16px;top:14px">AT</i></div>
<div class="c we" style="left:1117px;top:119px;width:43px"><b class="bl">90A</b></div>
<div class="c we" style="left:1162px;top:119px;width:43px"><b class="bl">90A</b></div>
<div class="c at" style="left:1207px;top:119px;width:43px"><b class="g">01A</b><div class="leaf"></div><i style="left:16px;top:14px">AT</i></div>
<div class="c at" style="left:1252px;top:119px;width:43px"><b class="g">01A</b><div class="leaf"></div><i style="left:16px;top:14px">AT</i></div>
<div class="c" style="left:1297px;top:119px;width:43px"><b class="g" style="left:0px;top:1px">01A</b><i style="left:2.5px;top:14px">08:48</i><i style="left:2.5px;top:27px">17:48</i></div>
<div class="c" style="left:1342px;top:119px;width:43px"><b class="g" style="left:0px;top:1px">01A</b><i style="left:2.5px;top:14px">08:49</i><i style="left:2.5px;top:27px">17:49</i></div>
<div class="c" style="left:1387px;top:119px;width:43px"><b class="g" style="left:0px;top:1px">01A</b><i style="left:2.5px;top:14px">08:50</i><i style="left:2.5px;top:27px">17:50</i></div>
<div class="c we" style="left:1432px;top:119px;width:43px"><b class="bl">90A</b></div>
<div class="emp" style="top:191px">
<svg class="ab" style="left:3px;top:1px" width="32" height="36" viewBox="0 0 32 36"><defs><clipPath id="cp2"><rect width="32" height="36" rx="5"/></clipPath><filter id="bl2" x="-10%" y="-10%" width="120%" height="120%"><feGaussianBlur stdDeviation="0.8"/></filter><radialGradient id="sk2" cx="50%" cy="45%" r="55%"><stop offset="0" stop-color="#a87860"/><stop offset="1" stop-color="#6a4432"/></radialGradient></defs><g clip-path="url(#cp2)"><rect width="32" height="36" fill="#d8c8a8"/><g filter="url(#bl2)"><path d="M-2 38 Q1 30 16 31 Q31 30 34 38z" fill="#1a1a1a"/><ellipse cx="16" cy="20" rx="9.2" ry="12.2" fill="url(#sk2)"/><path d="M5.5 19 Q3 3 16 2.5 Q29 3 26.5 19 Q26 10 16 9.5 Q6 10 5.5 19z" fill="#282018"/><ellipse cx="12" cy="19" rx="2.4" ry="1.2" fill="#3a2420" opacity="0.7"/><ellipse cx="20.5" cy="19" rx="2.4" ry="1.2" fill="#3a2420" opacity="0.7"/><path d="M10 16.3 Q12 15.6 14 16.3 M18.5 16.3 Q20.5 15.6 22.5 16.3" stroke="#3a2420" stroke-width="0.9" fill="none" opacity="0.6"/><path d="M16 20 V24.5 Q15 25 14.5 24.5" stroke="#8a5040" stroke-width="0.8" fill="none" opacity="0.5"/><ellipse cx="16.2" cy="27.5" rx="3.2" ry="1.1" fill="#904040" opacity="0.6"/></g></g></svg>
<div class="t" style="left:2px;top:38px;font-size:10.5px;line-height:13px">David Triggs<br>6</div>
</div>
<div class="ab" style="left:0;top:262px;width:126px;height:1px;background:#fff"></div>
<div class="c" style="left:126px;top:191px;width:44px"><b class="g" style="left:0px;top:1px">01A</b><i style="left:2.5px;top:14px">08:30</i><i style="left:2.5px;top:27px">17:30</i></div>
<div class="c we" style="left:172px;top:191px;width:43px"><b class="bl">90A</b></div>
<div class="c we" style="left:217px;top:191px;width:43px"><b class="bl">90A</b></div>
<div class="c" style="left:262px;top:191px;width:43px"><b class="g" style="left:0px;top:1px">01A</b><i style="left:2.5px;top:14px">08:31</i><i style="left:2.5px;top:27px">17:31</i></div>
<div class="c" style="left:307px;top:191px;width:43px"><b class="g" style="left:0px;top:1px">01A</b><i style="left:2.5px;top:14px">08:32</i><i style="left:2.5px;top:27px">17:32</i></div>
<div class="c" style="left:352px;top:191px;width:43px"><b class="g" style="left:0px;top:1px">01A</b><i style="left:2.5px;top:14px">08:33</i><i style="left:2.5px;top:27px">17:33</i></div>
<div class="c" style="left:397px;top:191px;width:43px"><b class="g" style="left:0px;top:1px">01A</b><i style="left:2.5px;top:14px">08:34</i><i style="left:2.5px;top:27px">17:34</i></div>
<div class="c" style="left:442px;top:191px;width:43px"><b class="g" style="left:0px;top:1px">01A</b><i style="left:2.5px;top:14px">08:35</i><i style="left:2.5px;top:27px">17:35</i></div>
<div class="c we" style="left:487px;top:191px;width:43px"><b class="bl">90A</b></div>
<div class="c we" style="left:532px;top:191px;width:43px"><b class="bl">90A</b></div>
<div class="c" style="left:577px;top:191px;width:43px"><b class="g" style="left:0px;top:1px">01A</b><i style="left:2.5px;top:14px">08:36</i><i style="left:2.5px;top:27px">17:36</i></div>
<div class="c" style="left:622px;top:191px;width:43px"><b class="g" style="left:0px;top:1px">01A</b><i style="left:2.5px;top:14px">08:37</i><i style="left:2.5px;top:27px">17:37</i></div>
<div class="c" style="left:667px;top:191px;width:43px"><b class="g" style="left:0px;top:1px">01A</b><i style="left:2.5px;top:14px">08:38</i><i style="left:2.5px;top:27px">17:38</i></div>
<div class="c" style="left:712px;top:191px;width:43px"><b class="g" style="left:0px;top:1px">01A</b><i style="left:2.5px;top:14px">08:39</i><i style="left:2.5px;top:27px">17:39</i></div>
<div class="c" style="left:757px;top:191px;width:43px"><b class="g" style="left:0px;top:1px">01A</b><i style="left:2.5px;top:14px">08:40</i><i style="left:2.5px;top:27px">17:40</i></div>
<div class="c we" style="left:802px;top:191px;width:43px"><b class="bl">90A</b></div>
<div class="c we" style="left:847px;top:191px;width:43px"><b class="bl">90A</b></div>
<div class="c" style="left:892px;top:191px;width:43px"><b class="g" style="left:0px;top:1px">01A</b><i style="left:2.5px;top:14px">08:41</i><i style="left:2.5px;top:27px">17:41</i></div>
<div class="c" style="left:937px;top:191px;width:43px"><b class="g" style="left:0px;top:1px">01A</b><i style="left:2.5px;top:14px">08:42</i><i style="left:2.5px;top:27px">17:42</i></div>
<div class="c" style="left:982px;top:191px;width:43px"><b class="g" style="left:0px;top:1px">01A</b><i style="left:2.5px;top:14px">08:43</i><i style="left:2.5px;top:27px">17:43</i></div>
<div class="c" style="left:1027px;top:191px;width:43px"><b class="g" style="left:0px;top:1px">01A</b><i style="left:2.5px;top:14px">08:44</i><i style="left:2.5px;top:27px">17:44</i></div>
<div class="c at" style="left:1072px;top:191px;width:43px"><b class="g">01A</b><div class="leaf"></div><i style="left:16px;top:14px">AT</i></div>
<div class="c we" style="left:1117px;top:191px;width:43px"><b class="bl">90A</b></div>
<div class="c we" style="left:1162px;top:191px;width:43px"><b class="bl">90A</b></div>
<div class="c at" style="left:1207px;top:191px;width:43px"><b class="g">01A</b><div class="leaf"></div><i style="left:16px;top:14px">AT</i></div>
<div class="c at" style="left:1252px;top:191px;width:43px"><b class="g">01A</b><div class="leaf"></div><i style="left:16px;top:14px">AT</i></div>
<div class="c" style="left:1297px;top:191px;width:43px"><b class="g" style="left:0px;top:1px">01A</b><i style="left:2.5px;top:14px">08:48</i><i style="left:2.5px;top:27px">17:48</i></div>
<div class="c" style="left:1342px;top:191px;width:43px"><b class="g" style="left:0px;top:1px">01A</b><i style="left:2.5px;top:14px">08:49</i><i style="left:2.5px;top:27px">17:49</i></div>
<div class="c" style="left:1387px;top:191px;width:43px"><b class="g" style="left:0px;top:1px">01A</b><i style="left:2.5px;top:14px">08:50</i><i style="left:2.5px;top:27px">17:50</i></div>
<div class="c we" style="left:1432px;top:191px;width:43px"><b class="bl">90A</b></div>
<div class="emp" style="top:263px">
<svg class="ab" style="left:3px;top:1px" width="32" height="36" viewBox="0 0 32 36"><defs><clipPath id="cp3"><rect width="32" height="36" rx="5"/></clipPath><filter id="bl3" x="-10%" y="-10%" width="120%" height="120%"><feGaussianBlur stdDeviation="0.8"/></filter><radialGradient id="sk3" cx="50%" cy="45%" r="55%"><stop offset="0" stop-color="#e8b8a0"/><stop offset="1" stop-color="#b88068"/></radialGradient></defs><g clip-path="url(#cp3)"><rect width="32" height="36" fill="#7a7060"/><g filter="url(#bl3)"><path d="M1 36 Q-1 8 8 2 Q16 -2 24 2 Q33 8 31 36 H26 Q27 14 16 11 Q5 14 6 36z" fill="#4a382a"/><path d="M-2 38 Q1 30 16 31 Q31 30 34 38z" fill="#6a5a4a"/><ellipse cx="16" cy="20" rx="9.2" ry="12.2" fill="url(#sk3)"/><path d="M6 16 Q7 5 16 5 Q25 5 26 16 Q24 9 16 9 Q8 9 6 16z" fill="#4a382a"/><ellipse cx="12" cy="19" rx="2.4" ry="1.2" fill="#3a2420" opacity="0.7"/><ellipse cx="20.5" cy="19" rx="2.4" ry="1.2" fill="#3a2420" opacity="0.7"/><path d="M10 16.3 Q12 15.6 14 16.3 M18.5 16.3 Q20.5 15.6 22.5 16.3" stroke="#3a2420" stroke-width="0.9" fill="none" opacity="0.6"/><path d="M16 20 V24.5 Q15 25 14.5 24.5" stroke="#8a5040" stroke-width="0.8" fill="none" opacity="0.5"/><ellipse cx="16.2" cy="27.5" rx="3.2" ry="1.1" fill="#904040" opacity="0.6"/></g></g></svg>
<div class="t" style="left:2px;top:38px;font-size:10.5px;line-height:13px">Els Peeters<br>2</div>
</div>
<div class="ab" style="left:0;top:334px;width:126px;height:1px;background:#fff"></div>
<div class="c" style="left:126px;top:263px;width:44px"><b class="g" style="left:0px;top:1px">01A</b><i style="left:2.5px;top:14px">08:30</i><i style="left:2.5px;top:27px">17:30</i></div>
<div class="c we" style="left:172px;top:263px;width:43px"><b class="bl">90A</b></div>
<div class="c we" style="left:217px;top:263px;width:43px"><b class="bl">90A</b></div>
<div class="c" style="left:262px;top:263px;width:43px"><b class="g" style="left:0px;top:1px">01A</b><i style="left:2.5px;top:14px">08:31</i><i style="left:2.5px;top:27px">17:31</i></div>
<div class="c" style="left:307px;top:263px;width:43px"><b class="g" style="left:0px;top:1px">01A</b><i style="left:2.5px;top:14px">08:32</i><i style="left:2.5px;top:27px">17:32</i></div>
<div class="c" style="left:352px;top:263px;width:43px"><b class="g" style="left:0px;top:1px">01A</b><i style="left:2.5px;top:14px">08:33</i><i style="left:2.5px;top:27px">17:33</i></div>
<div class="c" style="left:397px;top:263px;width:43px"><b class="g" style="left:0px;top:1px">01A</b><i style="left:2.5px;top:14px">08:34</i><i style="left:2.5px;top:27px">17:34</i></div>
<div class="c" style="left:442px;top:263px;width:43px"><b class="g" style="left:0px;top:1px">01A</b><i style="left:2.5px;top:14px">08:35</i><i style="left:2.5px;top:27px">17:35</i></div>
<div class="c we" style="left:487px;top:263px;width:43px"><b class="bl">90A</b></div>
<div class="c we" style="left:532px;top:263px;width:43px"><b class="bl">90A</b></div>
<div class="c" style="left:577px;top:263px;width:43px"><b class="g" style="left:0px;top:1px">01A</b><i style="left:2.5px;top:14px">08:36</i><i style="left:2.5px;top:27px">17:36</i></div>
<div class="c" style="left:622px;top:263px;width:43px"><b class="g" style="left:0px;top:1px">01A</b><i style="left:2.5px;top:14px">08:37</i><i style="left:2.5px;top:27px">17:37</i></div>
<div class="c" style="left:667px;top:263px;width:43px"><b class="g" style="left:0px;top:1px">01A</b><i style="left:2.5px;top:14px">08:38</i><i style="left:2.5px;top:27px">17:38</i></div>
<div class="c" style="left:712px;top:263px;width:43px"><b class="g" style="left:0px;top:1px">01A</b><i style="left:2.5px;top:14px">08:39</i><i style="left:2.5px;top:27px">17:39</i></div>
<div class="c" style="left:757px;top:263px;width:43px"><b class="g" style="left:0px;top:1px">01A</b><i style="left:2.5px;top:14px">08:40</i><i style="left:2.5px;top:27px">17:40</i></div>
<div class="c we" style="left:802px;top:263px;width:43px"><b class="bl">90A</b></div>
<div class="c we" style="left:847px;top:263px;width:43px"><b class="bl">90A</b></div>
<div class="c" style="left:892px;top:263px;width:43px"><b class="g" style="left:0px;top:1px">01A</b><i style="left:2.5px;top:14px">08:41</i><i style="left:2.5px;top:27px">17:41</i></div>
<div class="c" style="left:937px;top:263px;width:43px"><b class="g" style="left:0px;top:1px">01A</b><i style="left:2.5px;top:14px">08:42</i><i style="left:2.5px;top:27px">17:42</i></div>
<div class="c" style="left:982px;top:263px;width:43px"><b class="g" style="left:0px;top:1px">01A</b><i style="left:2.5px;top:14px">08:43</i><i style="left:2.5px;top:27px">17:43</i></div>
<div class="c" style="left:1027px;top:263px;width:43px"><b class="g" style="left:0px;top:1px">01A</b><i style="left:2.5px;top:14px">08:44</i><i style="left:2.5px;top:27px">17:44</i></div>
<div class="c at" style="left:1072px;top:263px;width:43px"><b class="g">01A</b><div class="leaf"></div><i style="left:16px;top:14px">AT</i></div>
<div class="c we" style="left:1117px;top:263px;width:43px"><b class="bl">90A</b></div>
<div class="c we" style="left:1162px;top:263px;width:43px"><b class="bl">90A</b></div>
<div class="c at" style="left:1207px;top:263px;width:43px"><b class="g">01A</b><div class="leaf"></div><i style="left:16px;top:14px">AT</i></div>
<div class="c at" style="left:1252px;top:263px;width:43px"><b class="g">01A</b><div class="leaf"></div><i style="left:16px;top:14px">AT</i></div>
<div class="c" style="left:1297px;top:263px;width:43px"><b class="g" style="left:0px;top:1px">01A</b><i style="left:2.5px;top:14px">08:48</i><i style="left:2.5px;top:27px">17:48</i></div>
<div class="c" style="left:1342px;top:263px;width:43px"><b class="g" style="left:0px;top:1px">01A</b><i style="left:2.5px;top:14px">08:49</i><i style="left:2.5px;top:27px">17:49</i></div>
<div class="c" style="left:1387px;top:263px;width:43px"><b class="g" style="left:0px;top:1px">01A</b><i style="left:2.5px;top:14px">08:50</i><i style="left:2.5px;top:27px">17:50</i></div>
<div class="c we" style="left:1432px;top:263px;width:43px"><b class="bl">90A</b></div>
<div class="emp" style="top:335px">
<svg class="ab" style="left:3px;top:1px" width="32" height="36" viewBox="0 0 32 36"><defs><clipPath id="cp4"><rect width="32" height="36" rx="5"/></clipPath><filter id="bl4" x="-10%" y="-10%" width="120%" height="120%"><feGaussianBlur stdDeviation="0.8"/></filter><radialGradient id="sk4" cx="50%" cy="45%" r="55%"><stop offset="0" stop-color="#e0a890"/><stop offset="1" stop-color="#b07868"/></radialGradient></defs><g clip-path="url(#cp4)"><rect width="32" height="36" fill="#a8a49c"/><g filter="url(#bl4)"><path d="M-2 38 Q1 30 16 31 Q31 30 34 38z" fill="#8a8a88"/><ellipse cx="16" cy="20" rx="9.2" ry="12.2" fill="url(#sk4)"/><path d="M5.5 19 Q3 3 16 2.5 Q29 3 26.5 19 Q26 10 16 9.5 Q6 10 5.5 19z" fill="#3a2e28"/><ellipse cx="12" cy="19" rx="2.4" ry="1.2" fill="#3a2420" opacity="0.7"/><ellipse cx="20.5" cy="19" rx="2.4" ry="1.2" fill="#3a2420" opacity="0.7"/><path d="M10 16.3 Q12 15.6 14 16.3 M18.5 16.3 Q20.5 15.6 22.5 16.3" stroke="#3a2420" stroke-width="0.9" fill="none" opacity="0.6"/><path d="M16 20 V24.5 Q15 25 14.5 24.5" stroke="#8a5040" stroke-width="0.8" fill="none" opacity="0.5"/><ellipse cx="16.2" cy="27.5" rx="3.2" ry="1.1" fill="#904040" opacity="0.6"/></g></g></svg>
<div class="t" style="left:2px;top:38px;font-size:10.5px;line-height:13px">Frank Henry<br>4</div>
</div>
<div class="ab" style="left:0;top:406px;width:126px;height:1px;background:#fff"></div>
<div class="c" style="left:126px;top:335px;width:44px"><b class="g" style="left:0px;top:1px">01A</b><i style="left:2.5px;top:14px">08:30</i><i style="left:2.5px;top:27px">17:30</i></div>
<div class="c we" style="left:172px;top:335px;width:43px"><b class="bl">90A</b></div>
<div class="c we" style="left:217px;top:335px;width:43px"><b class="bl">90A</b></div>
<div class="c" style="left:262px;top:335px;width:43px"><b class="g" style="left:0px;top:1px">01A</b><i style="left:2.5px;top:14px">08:31</i><i style="left:2.5px;top:27px">17:31</i></div>
<div class="c" style="left:307px;top:335px;width:43px"><b class="g" style="left:0px;top:1px">01A</b><i style="left:2.5px;top:14px">08:32</i><i style="left:2.5px;top:27px">17:32</i></div>
<div class="c" style="left:352px;top:335px;width:43px"><b class="g" style="left:0px;top:1px">01A</b><i style="left:2.5px;top:14px">08:33</i><i style="left:2.5px;top:27px">17:33</i></div>
<div class="c" style="left:397px;top:335px;width:43px"><b class="g" style="left:0px;top:1px">01A</b><i style="left:2.5px;top:14px">08:34</i><i style="left:2.5px;top:27px">17:34</i></div>
<div class="c" style="left:442px;top:335px;width:43px"><b class="g" style="left:0px;top:1px">01A</b><i style="left:2.5px;top:14px">08:35</i><i style="left:2.5px;top:27px">17:35</i></div>
<div class="c we" style="left:487px;top:335px;width:43px"><b class="bl">90A</b></div>
<div class="c we" style="left:532px;top:335px;width:43px"><b class="bl">90A</b></div>
<div class="c" style="left:577px;top:335px;width:43px"><b class="g" style="left:0px;top:1px">01A</b><i style="left:2.5px;top:14px">08:36</i><i style="left:2.5px;top:27px">17:36</i></div>
<div class="c" style="left:622px;top:335px;width:43px"><b class="g" style="left:0px;top:1px">01A</b><i style="left:2.5px;top:14px">08:37</i><i style="left:2.5px;top:27px">17:37</i></div>
<div class="c" style="left:667px;top:335px;width:43px"><b class="g" style="left:0px;top:1px">01A</b><i style="left:2.5px;top:14px">08:38</i><i style="left:2.5px;top:27px">17:38</i></div>
<div class="c" style="left:712px;top:335px;width:43px"><b class="g" style="left:0px;top:1px">01A</b><i style="left:2.5px;top:14px">08:39</i><i style="left:2.5px;top:27px">17:39</i></div>
<div class="c" style="left:757px;top:335px;width:43px"><b class="g" style="left:0px;top:1px">01A</b><i style="left:2.5px;top:14px">08:40</i><i style="left:2.5px;top:27px">17:40</i></div>
<div class="c we" style="left:802px;top:335px;width:43px"><b class="bl">90A</b></div>
<div class="c we" style="left:847px;top:335px;width:43px"><b class="bl">90A</b></div>
<div class="c" style="left:892px;top:335px;width:43px"><b class="g" style="left:0px;top:1px">01A</b><i style="left:2.5px;top:14px">08:41</i><i style="left:2.5px;top:27px">17:41</i></div>
<div class="c" style="left:937px;top:335px;width:43px"><b class="g" style="left:0px;top:1px">01A</b><i style="left:2.5px;top:14px">08:42</i><i style="left:2.5px;top:27px">17:42</i></div>
<div class="c" style="left:982px;top:335px;width:43px"><b class="g" style="left:0px;top:1px">01A</b><i style="left:2.5px;top:14px">08:43</i><i style="left:2.5px;top:27px">17:43</i></div>
<div class="c" style="left:1027px;top:335px;width:43px"><b class="g" style="left:0px;top:1px">01A</b><i style="left:2.5px;top:14px">08:44</i><i style="left:2.5px;top:27px">17:44</i></div>
<div class="c at" style="left:1072px;top:335px;width:43px"><b class="g">01A</b><div class="leaf"></div><i style="left:16px;top:14px">AT</i></div>
<div class="c we" style="left:1117px;top:335px;width:43px"><b class="bl">90A</b></div>
<div class="c we" style="left:1162px;top:335px;width:43px"><b class="bl">90A</b></div>
<div class="c at" style="left:1207px;top:335px;width:43px"><b class="g">01A</b><div class="leaf"></div><i style="left:16px;top:14px">AT</i></div>
<div class="c at" style="left:1252px;top:335px;width:43px"><b class="g">01A</b><div class="leaf"></div><i style="left:16px;top:14px">AT</i></div>
<div class="c" style="left:1297px;top:335px;width:43px"><b class="g" style="left:0px;top:1px">01A</b><i style="left:2.5px;top:14px">08:48</i><i style="left:2.5px;top:27px">17:48</i></div>
<div class="c" style="left:1342px;top:335px;width:43px"><b class="g" style="left:0px;top:1px">01A</b><i style="left:2.5px;top:14px">08:49</i><i style="left:2.5px;top:27px">17:49</i></div>
<div class="c" style="left:1387px;top:335px;width:43px"><b class="g" style="left:0px;top:1px">01A</b><i style="left:2.5px;top:14px">08:50</i><i style="left:2.5px;top:27px">17:50</i></div>
<div class="c we" style="left:1432px;top:335px;width:43px"><b class="bl">90A</b></div>
<div class="emp" style="top:407px">
<svg class="ab" style="left:3px;top:1px" width="32" height="36" viewBox="0 0 32 36"><defs><clipPath id="cp5"><rect width="32" height="36" rx="5"/></clipPath><filter id="bl5" x="-10%" y="-10%" width="120%" height="120%"><feGaussianBlur stdDeviation="0.8"/></filter><radialGradient id="sk5" cx="50%" cy="45%" r="55%"><stop offset="0" stop-color="#dcac88"/><stop offset="1" stop-color="#a87050"/></radialGradient></defs><g clip-path="url(#cp5)"><rect width="32" height="36" fill="#6a5040"/><g filter="url(#bl5)"><path d="M-2 38 Q1 30 16 31 Q31 30 34 38z" fill="#5a4a40"/><ellipse cx="16" cy="20" rx="9.2" ry="12.2" fill="url(#sk5)"/><path d="M5.5 19 Q3 3 16 2.5 Q29 3 26.5 19 Q26 10 16 9.5 Q6 10 5.5 19z" fill="#2a1e18"/><ellipse cx="12" cy="19" rx="2.4" ry="1.2" fill="#3a2420" opacity="0.7"/><ellipse cx="20.5" cy="19" rx="2.4" ry="1.2" fill="#3a2420" opacity="0.7"/><path d="M10 16.3 Q12 15.6 14 16.3 M18.5 16.3 Q20.5 15.6 22.5 16.3" stroke="#3a2420" stroke-width="0.9" fill="none" opacity="0.6"/><path d="M16 20 V24.5 Q15 25 14.5 24.5" stroke="#8a5040" stroke-width="0.8" fill="none" opacity="0.5"/><ellipse cx="16.2" cy="27.5" rx="3.2" ry="1.1" fill="#904040" opacity="0.6"/></g></g></svg>
<div class="t" style="left:2px;top:38px;font-size:10.5px;line-height:13px">Ilan Boris<br>3</div>
</div>
<div class="c" style="left:126px;top:407px;width:44px"><b class="g" style="left:0px;top:1px">01A</b><i style="left:2.5px;top:14px">08:30</i><i style="left:2.5px;top:27px">17:30</i></div>
<div class="c we" style="left:172px;top:407px;width:43px"><b class="bl">90A</b></div>
<div class="c we" style="left:217px;top:407px;width:43px"><b class="bl">90A</b></div>
<div class="c" style="left:262px;top:407px;width:43px"><b class="g" style="left:0px;top:1px">01A</b><i style="left:2.5px;top:14px">08:31</i><i style="left:2.5px;top:27px">17:31</i></div>
<div class="c" style="left:307px;top:407px;width:43px"><b class="g" style="left:0px;top:1px">01A</b><i style="left:2.5px;top:14px">08:32</i><i style="left:2.5px;top:27px">17:32</i></div>
<div class="c" style="left:352px;top:407px;width:43px"><b class="g" style="left:0px;top:1px">01A</b><i style="left:2.5px;top:14px">08:33</i><i style="left:2.5px;top:27px">17:33</i></div>
<div class="c" style="left:397px;top:407px;width:43px"><b class="g" style="left:0px;top:1px">01A</b><i style="left:2.5px;top:14px">08:34</i><i style="left:2.5px;top:27px">17:34</i></div>
<div class="c" style="left:442px;top:407px;width:43px"><b class="g" style="left:0px;top:1px">01A</b><i style="left:2.5px;top:14px">08:35</i><i style="left:2.5px;top:27px">17:35</i></div>
<div class="c we" style="left:487px;top:407px;width:43px"><b class="bl">90A</b></div>
<div class="c we" style="left:532px;top:407px;width:43px"><b class="bl">90A</b></div>
<div class="c" style="left:577px;top:407px;width:43px"><b class="g" style="left:0px;top:1px">01A</b><i style="left:2.5px;top:14px">08:36</i><i style="left:2.5px;top:27px">17:36</i></div>
<div class="c" style="left:622px;top:407px;width:43px"><b class="g" style="left:0px;top:1px">01A</b><i style="left:2.5px;top:14px">08:37</i><i style="left:2.5px;top:27px">17:37</i></div>
<div class="c" style="left:667px;top:407px;width:43px"><b class="g" style="left:0px;top:1px">01A</b><i style="left:2.5px;top:14px">08:38</i><i style="left:2.5px;top:27px">17:38</i></div>
<div class="c" style="left:712px;top:407px;width:43px"><b class="g" style="left:0px;top:1px">01A</b><i style="left:2.5px;top:14px">08:39</i><i style="left:2.5px;top:27px">17:39</i></div>
<div class="c" style="left:757px;top:407px;width:43px"><b class="g" style="left:0px;top:1px">01A</b><i style="left:2.5px;top:14px">08:40</i><i style="left:2.5px;top:27px">17:40</i></div>
<div class="c we" style="left:802px;top:407px;width:43px"><b class="bl">90A</b></div>
<div class="c we" style="left:847px;top:407px;width:43px"><b class="bl">90A</b></div>
<div class="c" style="left:892px;top:407px;width:43px"><b class="g" style="left:0px;top:1px">01A</b><i style="left:2.5px;top:14px">08:41</i><i style="left:2.5px;top:27px">17:41</i></div>
<div class="c" style="left:937px;top:407px;width:43px"><b class="g" style="left:0px;top:1px">01A</b><i style="left:2.5px;top:14px">08:42</i><i style="left:2.5px;top:27px">17:42</i></div>
<div class="c" style="left:982px;top:407px;width:43px"><b class="g" style="left:0px;top:1px">01A</b><i style="left:2.5px;top:14px">08:43</i><i style="left:2.5px;top:27px">17:43</i></div>
<div class="c" style="left:1027px;top:407px;width:43px"><b class="g" style="left:0px;top:1px">01A</b><i style="left:2.5px;top:14px">08:44</i><i style="left:2.5px;top:27px">17:44</i></div>
<div class="c at" style="left:1072px;top:407px;width:43px"><b class="g">01A</b><div class="leaf"></div><i style="left:16px;top:14px">AT</i></div>
<div class="c we" style="left:1117px;top:407px;width:43px"><b class="bl">90A</b></div>
<div class="c we" style="left:1162px;top:407px;width:43px"><b class="bl">90A</b></div>
<div class="c at" style="left:1207px;top:407px;width:43px"><b class="g">01A</b><div class="leaf"></div><i style="left:16px;top:14px">AT</i></div>
<div class="c at" style="left:1252px;top:407px;width:43px"><b class="g">01A</b><div class="leaf"></div><i style="left:16px;top:14px">AT</i></div>
<div class="c" style="left:1297px;top:407px;width:43px"><b class="g" style="left:0px;top:1px">01A</b><i style="left:2.5px;top:14px">08:48</i><i style="left:2.5px;top:27px">17:48</i></div>
<div class="c" style="left:1342px;top:407px;width:43px"><b class="g" style="left:0px;top:1px">01A</b><i style="left:2.5px;top:14px">08:49</i><i style="left:2.5px;top:27px">17:49</i></div>
<div class="c" style="left:1387px;top:407px;width:43px"><b class="g" style="left:0px;top:1px">01A</b><i style="left:2.5px;top:14px">08:50</i><i style="left:2.5px;top:27px">17:50</i></div>
<div class="c we" style="left:1432px;top:407px;width:43px"><b class="bl">90A</b></div>
<div class="ab" style="left:441px;top:46px;width:45px;height:72px;border:1px solid #f26a22"></div>
<div class="ab" style="left:0;top:43px;width:1px;height:420px;background:#2a90e0"></div>
</div>
<div class="ab" style="left:1502px;top:231px;width:11px;height:267px;background:#d0d0d0;border-radius:4px"></div>
<svg class="ab" style="left:7px;top:521px" width="11" height="12" viewBox="0 0 11 12"><rect x="0" y="0.5" width="2" height="11" fill="#c8c8c8"/><path d="M10 0.5 L3 6 L10 11.5z" fill="#c8c8c8"/></svg>
<svg class="ab" style="left:30px;top:521px" width="7" height="12" viewBox="0 0 7 12"><path d="M7 0.5 L0 6 L7 11.5z" fill="#c8c8c8"/></svg>
<div class="ab" style="left:48px;top:520px;width:1px;height:14px;background:#8ab8ea"></div>
<div class="t" style="left:57px;top:523px;font-size:10.3px;color:#222">Page</div>
<div class="ab" style="left:89px;top:517px;width:30px;height:20px;border:1px solid #b5b8c8;border-radius:3px;background:#fff"></div>
<div class="t" style="left:93px;top:522px;font-size:11px">1</div>
<div class="t" style="left:127px;top:522px;font-size:10.5px;color:#222">of 1</div>
<div class="ab" style="left:154px;top:520px;width:1px;height:14px;background:#8ab8ea"></div>
<svg class="ab" style="left:166px;top:521px" width="7" height="12" viewBox="0 0 7 12"><path d="M0 0.5 L7 6 L0 11.5z" fill="#c8c8c8"/></svg>
<svg class="ab" style="left:186px;top:521px" width="11" height="12" viewBox="0 0 11 12"><path d="M0 0.5 L7 6 L0 11.5z" fill="#c8c8c8"/><rect x="8" y="0.5" width="2" height="11" fill="#c8c8c8"/></svg>
<div class="ab" style="left:205px;top:520px;width:1px;height:14px;background:#8ab8ea"></div>
<svg class="ab" style="left:212px;top:519px" width="16" height="16" viewBox="0 0 16 16"><path d="M2.5 7 A5.5 5.5 0 0 1 12.5 4.5" fill="none" stroke="#2a8ad8" stroke-width="2.4"/><path d="M10 1.5 L15 4 L11 7.5z" fill="#2a8ad8"/><path d="M13.5 9 A5.5 5.5 0 0 1 3.5 11.5" fill="none" stroke="#2a8ad8" stroke-width="2.4"/><path d="M6 14.5 L1 12 L5 8.5z" fill="#2a8ad8"/></svg>
<div class="ab" style="left:234px;top:520px;width:1px;height:14px;background:#8ab8ea"></div>
<div class="ab" style="left:259px;top:520px;width:1px;height:14px;background:#8ab8ea"></div>
<div class="t" style="left:264px;top:522px;font-size:11.4px;font-weight:bold">No calculation in progress</div>
<div class="t" style="left:1335px;top:522px;font-size:11px;color:#222">Displaying employee(s) 1 - 10 of 10</div>
<div class="ab" style="left:14px;top:543px;width:160px;height:4px;background:#c4e2f6;border:1px solid #a8cce8;border-bottom:none"></div>
<div class="ab" style="left:0;top:546px;width:320px;height:22px;border:1px solid #e0e0e0;border-left:none;border-bottom:none;border-radius:0 4px 0 0;background:#fff"></div>
<div class="ab" style="left:3px;top:549px;width:310px;height:17px;background:#c0c0c0"></div>
<div class="ab" style="left:0;top:568px;width:1516px;height:1px;background:#d0d0d0"></div>
<svg class="ab" style="left:1467px;top:547px" width="14" height="14" viewBox="0 0 14 14"><path d="M2 2 L12 12 M12 2 L2 12" stroke="#e01818" stroke-width="3.2"/></svg>
<div class="ab" style="left:1488px;top:546px;width:1px;height:16px;background:#8ab8ea"></div>
<div class="ab" style="left:1460px;top:547px;width:1px;height:15px;background:#8ab8ea"></div>
<svg class="ab" style="left:1497px;top:546px" width="13" height="16" viewBox="0 0 13 16"><defs><linearGradient id="mg" x1="0" y1="0" x2="0" y2="1"><stop offset="0" stop-color="#90d8f8"/><stop offset="0.5" stop-color="#3a7ab8"/><stop offset="1" stop-color="#0a2a6a"/></linearGradient></defs><rect x="0.4" y="0.4" width="12.2" height="10" fill="url(#mg)" stroke="#a0a8b0" stroke-width="0.8"/><path d="M5 11 H8 L8.5 12.5 H4.5z" fill="#808890"/><rect x="2" y="12.5" width="9" height="3" rx="1.2" fill="#c8ccd0" stroke="#707880" stroke-width="0.5"/></svg>
<div class="ab" style="left:475px;top:31px;width:167px;height:537px;border:1px solid #8fb3cf;background:#fff"></div>
<div class="ab" style="left:505px;top:34px;width:1px;height:530px;background:#e4e4e4"></div>
<div class="ab" style="left:478px;top:386px;width:161px;height:1px;background:#e0e0e0"></div>
<div class="ab" style="left:478px;top:390px;width:161px;height:25px;border:1px solid #a8ccf4;background:linear-gradient(#e2eefb,#c8ddf6)"></div>
<div class="mi" style="top:40px">Add booking</div>
<svg class="ab" style="left:627px;top:42px" width="6" height="9" viewBox="0 0 6 9"><path d="M0 0 L6 4.5 L0 9z" fill="#3a7ad8"/></svg>
<div class="mi" style="top:65px">Add absence</div>
<div class="mi" style="top:90px">Absence operations</div>
<svg class="ab" style="left:627px;top:92px" width="6" height="9" viewBox="0 0 6 9"><path d="M0 0 L6 4.5 L0 9z" fill="#3a7ad8"/></svg>
<div class="mi" style="top:115px">Counters corrections</div>
<svg class="ab" style="left:627px;top:117px" width="6" height="9" viewBox="0 0 6 9"><path d="M0 0 L6 4.5 L0 9z" fill="#3a7ad8"/></svg>
<div class="mi" style="top:140px">Register department</div>
<div class="mi" style="top:165px">Send message</div>
<div class="mi" style="top:190px">Add note</div>
<div class="mi" style="top:215px">Add data collection</div>
<div class="mi" style="top:240px">Scheduler</div>
<div class="mi" style="top:265px">Change day program</div>
<div class="mi" style="top:290px">Change cycle</div>
<div class="mi" style="top:315px">Recalculation</div>
<div class="mi" style="top:340px">Rebuild holiday</div>
<div class="mi" style="top:365px">Reports</div>
<svg class="ab" style="left:627px;top:367px" width="6" height="9" viewBox="0 0 6 9"><path d="M0 0 L6 4.5 L0 9z" fill="#3a7ad8"/></svg>
<div class="mi" style="top:396px">View timecard</div>
<div class="mi" style="top:421px">Yearly view</div>
<div class="mi" style="top:446px">View holiday card</div>
<div class="mi" style="top:471px">View anomalies</div>
<div class="mi" style="top:496px">Daily view</div>
<div class="mi" style="top:521px">View files</div>
<div class="mi" style="top:546px">View booking locations</div>
<svg class="ab" style="left:483px;top:38px" width="17" height="17" viewBox="0 0 17 17"><defs><radialGradient id="clk" cx="50%" cy="40%" r="60%"><stop offset="0" stop-color="#ffffff"/><stop offset="1" stop-color="#a8dcf4"/></radialGradient></defs><circle cx="8" cy="9" r="7.6" fill="#f0f0f0" stroke="#d8d8d8" stroke-width="0.6"/><circle cx="8" cy="9" r="6" fill="url(#clk)" stroke="#c0d8e8" stroke-width="0.5"/><path d="M5 7.3 L7.6 9.2 L11.2 7.1" stroke="#303030" stroke-width="1.3" fill="none" stroke-linejoin="round"/><path d="M8 3.6 V4.4 M8 13.6 V14.4 M2.6 9 H3.4 M12.6 9 H13.4" stroke="#8aa0b0" stroke-width="0.6"/></svg>
<svg class="ab" style="left:483px;top:63px" width="17" height="17" viewBox="0 0 17 17"><path d="M8.5 14.5 V11 Q8.5 8.3 12.2 8.3 Q16 8.3 16 11 V14.5z" fill="#e81010"/><ellipse cx="12.2" cy="5.8" rx="1.9" ry="2.2" fill="#e8a070"/><path d="M10.1 5.5 Q9.8 2 12.2 2 Q14.8 2 14.4 5.5 Q13.5 3.8 12 4 Q10.8 4.2 10.1 5.5z" fill="#101010"/><circle cx="4.9" cy="13.4" r="4.3" fill="#e81010" stroke="#404040" stroke-width="1"/><path d="M2.6 11.6 L4.6 13.3 L7.2 14.8" stroke="#ffd0d0" stroke-width="0.8" fill="none"/></svg>
<svg class="ab" style="left:483px;top:88px" width="17" height="17" viewBox="0 0 17 17"><path d="M8.5 14.5 V11 Q8.5 8.3 12.2 8.3 Q16 8.3 16 11 V14.5z" fill="#e81010"/><ellipse cx="12.2" cy="5.8" rx="1.9" ry="2.2" fill="#e8a070"/><path d="M10.1 5.5 Q9.8 2 12.2 2 Q14.8 2 14.4 5.5 Q13.5 3.8 12 4 Q10.8 4.2 10.1 5.5z" fill="#101010"/><circle cx="4.9" cy="13.4" r="4.3" fill="#e81010" stroke="#404040" stroke-width="1"/><path d="M2.6 11.6 L4.6 13.3 L7.2 14.8" stroke="#ffd0d0" stroke-width="0.8" fill="none"/></svg>
<svg class="ab" style="left:483px;top:113px" width="17" height="17" viewBox="0 0 17 17"><rect x="1" y="1" width="14" height="12" fill="#f4f0e4" stroke="#b8b0a0" stroke-width="0.8"/><path d="M3 4 H13 M3 6.5 H13 M3 9 H13" stroke="#c8c0b0" stroke-width="0.8"/><path d="M4 9 L5.2 11.8 L8 12 L5.8 13.7 L6.6 16 L4 14.6 L1.4 16 L2.2 13.7 L0 12 L2.8 11.8z" fill="#f8c820"/></svg>
<svg class="ab" style="left:483px;top:138px" width="17" height="17" viewBox="0 0 17 17"><rect x="2" y="1" width="12" height="14" fill="#f8f8f8" stroke="#c8c8c8" stroke-width="0.8"/><path d="M4 8 L9 5 M5 11 L11 8" stroke="#e03030" stroke-width="1.6"/><circle cx="12" cy="13" r="2.5" fill="#e8eef8" stroke="#a0b0c8" stroke-width="0.6"/></svg>
<svg class="ab" style="left:483px;top:163px" width="17" height="17" viewBox="0 0 17 17"><defs><linearGradient id="smg" x1="0" y1="0" x2="0" y2="1"><stop offset="0" stop-color="#b8f0a0"/><stop offset="0.5" stop-color="#40b830"/><stop offset="1" stop-color="#108010"/></linearGradient></defs><ellipse cx="8.5" cy="7.5" rx="7.8" ry="6.2" fill="url(#smg)"/><path d="M4.5 11.5 L3.5 16 L8.5 12.5z" fill="#20a020"/><path d="M7.6 3 H9.6 L9.2 8.5 H8z" fill="#fff"/><circle cx="8.6" cy="10.2" r="1" fill="#fff"/></svg>
<svg class="ab" style="left:483px;top:188px" width="17" height="17" viewBox="0 0 17 17"><defs><linearGradient id="ntg" x1="0" y1="0" x2="1" y2="1"><stop offset="0" stop-color="#80c0ff"/><stop offset="1" stop-color="#1a60e0"/></linearGradient></defs><path d="M1.5 4 L13 2.5 L15.5 12.5 L4 14.5z" fill="#e8f0ff" stroke="#7aa0d8" stroke-width="0.6"/><path d="M1.5 3.5 L13 2 L15 11.5 L3.5 13.5z" fill="url(#ntg)"/><path d="M2 3.4 L13 2" stroke="#202a40" stroke-width="1.8" stroke-dasharray="1.1 0.7"/></svg>
<svg class="ab" style="left:483px;top:213px" width="17" height="17" viewBox="0 0 17 17"><rect x="4" y="0.8" width="8" height="2.5" rx="1" fill="#b0b8c0"/><path d="M2.5 4 Q2.5 2.8 4 2.8 H12 Q13.5 2.8 13.5 4 V13 Q13.5 14.5 12 14.5 H4 Q2.5 14.5 2.5 13z" fill="#c8d0d8" stroke="#606870" stroke-width="0.8"/><path d="M4 5.5 H12 V10 H4z" fill="#f8d040"/><path d="M8 5.5 H12 V10 H8z" fill="#3a90e0"/><circle cx="10" cy="6.5" r="1.5" fill="#60b0f0"/><rect x="4" y="14.5" width="2" height="2" fill="#404850"/><rect x="10" y="14.5" width="2" height="2" fill="#404850"/></svg>
<svg class="ab" style="left:483px;top:238px" width="17" height="17" viewBox="0 0 17 17"><rect x="0.5" y="2" width="13" height="11" fill="#f0f4f0" stroke="#8090a0" stroke-width="0.8"/><rect x="0.5" y="2" width="13" height="2.6" fill="#60b050"/><path d="M4 4.6 V13 M7.5 4.6 V13 M0.5 8 H13.5 M0.5 10.5 H13.5" stroke="#c0c8d0" stroke-width="0.6"/><circle cx="12" cy="12.2" r="3.8" fill="#30a030" stroke="#fff" stroke-width="0.6"/><circle cx="12" cy="12.2" r="1.6" fill="#fff"/></svg>
<svg class="ab" style="left:483px;top:263px" width="17" height="17" viewBox="0 0 17 17"><rect x="0.5" y="2.5" width="15" height="11" fill="#f0f2f4" stroke="#b8c0c8" stroke-width="0.8"/><rect x="0.5" y="2.5" width="15" height="2.6" fill="#3a80d0"/><path d="M2 12 Q4 8 8.5 8.5" stroke="#30a030" stroke-width="1.8" fill="none"/><path d="M7.5 6.5 L10.5 8.7 L7.5 10.8z" fill="#30a030"/></svg>
<svg class="ab" style="left:483px;top:288px" width="17" height="17" viewBox="0 0 17 17"><circle cx="8" cy="8" r="6.5" fill="none" stroke="#40b030" stroke-width="2.4"/><circle cx="8" cy="8" r="4" fill="#f4f8e8" stroke="#c0c8a0" stroke-width="0.6"/><path d="M8 5.5 V8 L10 9" stroke="#707070" stroke-width="0.9" fill="none"/></svg>
<svg class="ab" style="left:483px;top:313px" width="17" height="17" viewBox="0 0 17 17"><circle cx="8" cy="8" r="7.3" fill="#304050"/><circle cx="8" cy="8" r="5.5" fill="#f0c070"/><path d="M5 11 L11 5" stroke="#604020" stroke-width="1.2"/><circle cx="5.5" cy="5.5" r="1.2" fill="#604020"/><circle cx="10.5" cy="10.5" r="1.2" fill="#604020"/></svg>
<svg class="ab" style="left:483px;top:338px" width="17" height="17" viewBox="0 0 17 17"><path d="M13 5 A6 6 0 1 0 13.5 10" fill="none" stroke="#203040" stroke-width="2.6"/><path d="M10.5 2 L15.5 3 L13.5 7.5z" fill="#203040"/></svg>
<svg class="ab" style="left:483px;top:363px" width="17" height="17" viewBox="0 0 17 17"><path d="M8 8 L8 1 A7 7 0 0 0 1.3 10z" fill="#2a6ab8"/><path d="M8 8 L1.3 10 A7 7 0 0 0 14.5 11z" fill="#f8c820"/><path d="M8 8 L14.5 11 A7 7 0 0 0 15 9z" fill="#e03030"/><path d="M8 8 L15 9 A7 7 0 0 0 8 1z" fill="#30a040"/></svg>
<svg class="ab" style="left:483px;top:394px" width="17" height="17" viewBox="0 0 17 17"><rect x="2" y="1" width="13" height="14" fill="#f0f4e0" stroke="#c8d0b0" stroke-width="0.8"/><rect x="2" y="1" width="13" height="3" fill="#70b040"/><path d="M2 7 H15 M2 10 H15 M6 4 V15" stroke="#c0d0a0" stroke-width="0.8"/></svg>
<svg class="ab" style="left:483px;top:419px" width="17" height="17" viewBox="0 0 17 17"><rect x="1.5" y="1.5" width="13" height="13" rx="1.5" fill="#f8f8f8" stroke="#909090" stroke-width="0.8"/><rect x="1.5" y="1.5" width="13" height="3" fill="#3a80d8"/><path d="M4 7.5 H6 M7 7.5 H9 M10 7.5 H12 M4 10.5 H6 M7 10.5 H9 M10 10.5 H12" stroke="#e06020" stroke-width="1.4"/></svg>
<svg class="ab" style="left:483px;top:444px" width="17" height="17" viewBox="0 0 17 17"><circle cx="5.5" cy="11" r="4.5" fill="#e83030"/><path d="M1 11 A4.5 4.5 0 0 0 10 11z" fill="#3080e0"/><path d="M3 7 A4.5 4.5 0 0 1 8 7 L5.5 11z" fill="#f8d020"/><path d="M11 15 L12 5" stroke="#8a5a20" stroke-width="1.4"/><path d="M7 5 Q12 1 16 5 Q12 3 7 5z" fill="#30a030" stroke="#30a030"/></svg>
<svg class="ab" style="left:483px;top:469px" width="17" height="17" viewBox="0 0 17 17"><circle cx="8" cy="8" r="7.2" fill="#d02020" stroke="#802020" stroke-width="0.6"/><circle cx="8" cy="8" r="5" fill="#f8f0f0"/><rect x="7" y="4" width="2" height="5" fill="#d02020"/><rect x="7" y="10" width="2" height="2" fill="#d02020"/></svg>
<svg class="ab" style="left:483px;top:494px" width="17" height="17" viewBox="0 0 17 17"><rect x="1.5" y="2.5" width="13" height="13" rx="1.5" fill="#fff" stroke="#909090" stroke-width="0.8"/><rect x="1.5" y="2.5" width="13" height="3" fill="#8ab8e8"/><rect x="4" y="0.5" width="1.5" height="4" fill="#606060"/><rect x="10.5" y="0.5" width="1.5" height="4" fill="#606060"/><text x="8" y="14" font-size="8" text-anchor="middle" font-family="Liberation Sans" fill="#303030">1</text></svg>
<svg class="ab" style="left:483px;top:519px" width="17" height="17" viewBox="0 0 17 17"><path d="M1 4 H6 L7.5 5.5 H15 V15 H1z" fill="#f0c870"/><rect x="3" y="2" width="10" height="9" fill="#fff" stroke="#c0c0c0" stroke-width="0.6"/><path d="M1 8 H15 V15 H1z" fill="#f8d890"/></svg>
<svg class="ab" style="left:483px;top:544px" width="17" height="17" viewBox="0 0 17 17"><circle cx="6.5" cy="10" r="5.5" fill="#2a70c0"/><path d="M3 8 Q5 6 7 8 Q6 11 4 11z M8 12 Q10 10 11 12 Q9 15 8 14z" fill="#40a030"/><path d="M8 9 L13 4" stroke="#c03030" stroke-width="1.2"/><rect x="11.5" y="0.5" width="4.5" height="4.5" fill="#e81818" transform="rotate(45 13.75 2.75)"/></svg>
<svg class="ab" style="left:547px;top:405px" width="20" height="27" viewBox="0 0 20 27"><path d="M6 2 Q6 0.5 7.5 0.5 Q9 0.5 9 2 V10 Q9 8.5 10.5 8.5 Q12 8.5 12 10 V11 Q12 9.5 13.5 9.5 Q15 9.5 15 11 V12 Q15 10.5 16.5 10.5 Q18 10.5 18 12 V19 Q18 24 14 26 H9 Q6 25 4 21 L1 15 Q0.5 13.5 2 13 Q3 12.5 4 14 L6 17z" fill="#fff" stroke="#000" stroke-width="1"/><path d="M9 10 V16 M12 11 V16 M15 12 V16" stroke="#000" stroke-width="0.8"/></svg>
</body></html>
